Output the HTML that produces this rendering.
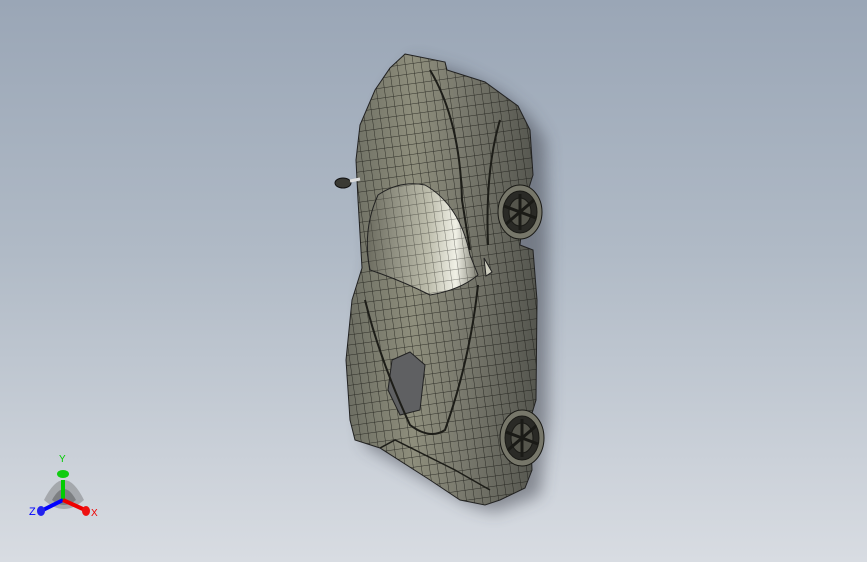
<!DOCTYPE html>
<html><head><meta charset="utf-8"><style>
html,body{margin:0;padding:0}
body{width:867px;height:562px;overflow:hidden;background:linear-gradient(#9aa6b6 0%,#b0bac6 45%,#d8dce2 100%);font-family:"Liberation Sans",sans-serif}
svg{position:absolute;left:0;top:0}
</style></head><body>
<svg width="867" height="562" viewBox="0 0 867 562">
<defs>
<linearGradient id="body" x1="0" x2="1" y1="0" y2="0">
<stop offset="0" stop-color="#6c6d62"/><stop offset="0.35" stop-color="#8e8e7c"/><stop offset="0.6" stop-color="#7a7a6e"/><stop offset="1" stop-color="#55564f"/>
</linearGradient>
<linearGradient id="glass" x1="0" x2="1" y1="0" y2="0">
<stop offset="0" stop-color="#6c6c60"/><stop offset="0.55" stop-color="#bdbdac"/><stop offset="0.8" stop-color="#f0f0e6"/><stop offset="1" stop-color="#7e7e72"/>
</linearGradient>
<filter id="sh"><feGaussianBlur stdDeviation="8"/></filter>
<pattern id="grid" width="8" height="10" patternUnits="userSpaceOnUse" patternTransform="rotate(-8)">
<path d="M0 0H8M0 0V10" stroke="#141410" stroke-width="1" fill="none"/>
</pattern>
</defs>
<path d="M415 60 L460 72 L500 92 L528 115 L545 140 L548 230 L548 420 L540 495 L495 512 L470 505 L365 445 L360 380 L365 300 L372 255 L368 185 L372 135 L392 85 Z" fill="#3a3e46" opacity="0.5" filter="url(#sh)"/>
<path d="M405 54 L445 62 L447 70 L485 82 L518 106 L530 130 L533 175 L525 200 L520 245 L533 250 L537 300 L536 400 L530 420 L532 470 L525 488 L500 500 L485 505 L460 500 L430 480 L380 448 L355 440 L350 420 L346 360 L352 300 L362 268 L358 200 L356 160 L360 125 L375 90 L390 68 Z" fill="url(#body)" stroke="#222" stroke-width="1"/>
<path d="M405 54 L445 62 L447 70 L485 82 L518 106 L530 130 L533 175 L525 200 L520 245 L533 250 L537 300 L536 400 L530 420 L532 470 L525 488 L500 500 L485 505 L460 500 L430 480 L380 448 L355 440 L350 420 L346 360 L352 300 L362 268 L358 200 L356 160 L360 125 L375 90 L390 68 Z" fill="url(#grid)" opacity="0.75"/>
<path d="M378 195 Q400 180 425 185 Q460 205 470 255 L478 275 Q460 290 430 295 Q400 280 370 270 Q362 230 378 195 Z" fill="url(#glass)" stroke="#222"/>
<path d="M378 195 Q400 180 425 185 Q460 205 470 255 L478 275 Q460 290 430 295 Q400 280 370 270 Q362 230 378 195 Z" fill="url(#grid)" opacity="0.5"/>
<path d="M392 360 L410 352 L425 365 L420 410 L400 415 L388 390 Z" fill="#5f6062" stroke="#222"/>
<path d="M365 300 Q380 360 410 425 Q430 440 445 430 Q470 360 478 285" fill="none" stroke="#1d1d18" stroke-width="2"/>
<path d="M430 70 Q460 120 462 200 L470 250" fill="none" stroke="#1d1d18" stroke-width="2"/>
<path d="M500 120 Q485 170 488 245" fill="none" stroke="#1d1d18" stroke-width="2"/>
<path d="M380 448 L395 440 L455 470 L490 490" fill="none" stroke="#1d1d18" stroke-width="1.5"/>
<g stroke="#1a1a16" fill="#2a2a26">
<ellipse cx="520" cy="212" rx="22" ry="27" fill="#77776a"/>
<ellipse cx="520" cy="212" rx="17" ry="21"/>
<ellipse cx="520" cy="212" rx="11" ry="14" fill="#55554c"/>
<path d="M520 194 L520 230 M504 206 L536 218 M506 224 L534 200" stroke-width="3"/>
<ellipse cx="522" cy="438" rx="22" ry="28" fill="#77776a"/>
<ellipse cx="522" cy="438" rx="17" ry="22"/>
<ellipse cx="522" cy="438" rx="11" ry="15" fill="#55554c"/>
<path d="M522 419 L522 457 M506 432 L538 444 M508 450 L536 426" stroke-width="3"/>
</g>
<ellipse cx="343" cy="183" rx="8" ry="5" fill="#3a3a34" stroke="#111"/>
<path d="M350 181 L360 179" stroke="#ddd" stroke-width="3"/>
<path d="M484 258 L492 272 L486 276 Z" fill="#cfcfc0" stroke="#222"/>
<path d="M44 500 Q64 460 84 500 Q64 518 44 500Z" fill="#555" opacity="0.35"/>
<path d="M52 500 Q64 478 76 500 Q64 510 52 500Z" fill="#333" opacity="0.35"/>
<line x1="63" y1="480" x2="63" y2="500" stroke="#0c0" stroke-width="4"/>
<ellipse cx="63" cy="474" rx="6" ry="4" fill="#1c1"/>
<line x1="63" y1="500" x2="43" y2="510" stroke="#00f" stroke-width="4"/>
<ellipse cx="41" cy="511" rx="4" ry="5" fill="#22e"/>
<line x1="63" y1="500" x2="85" y2="510" stroke="#e00" stroke-width="4"/>
<ellipse cx="86" cy="511" rx="4" ry="5" fill="#e11"/>
<text x="59" y="462" font-size="10" fill="#0c0" font-family="Liberation Sans">Y</text>
<text x="29" y="515" font-size="11" fill="#00f" font-family="Liberation Sans">Z</text>
<text x="91" y="516" font-size="10" fill="#e00" font-family="Liberation Sans">X</text>
</svg>
</body></html>
